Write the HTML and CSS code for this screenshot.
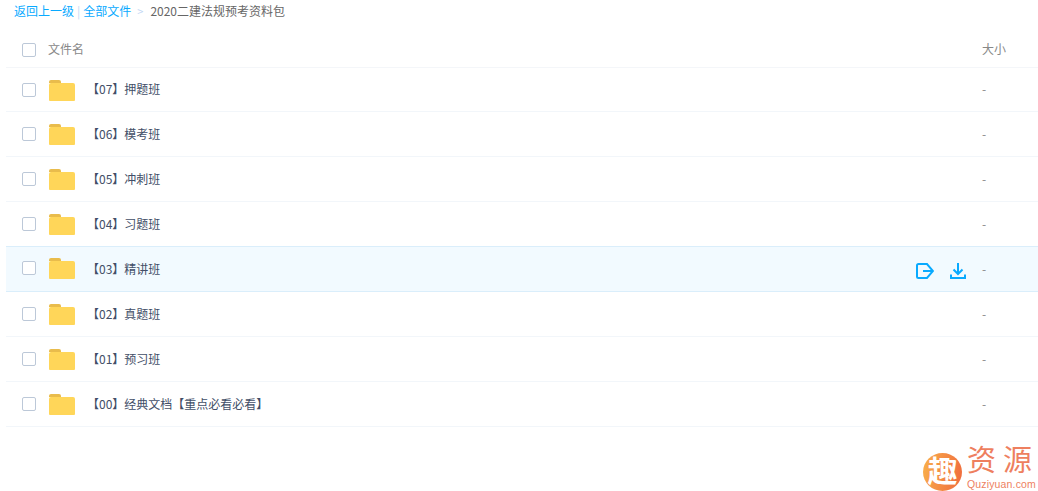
FILE: index.html
```html
<!DOCTYPE html>
<html lang="zh-CN">
<head>
<meta charset="utf-8">
<title>2020二建法规预考资料包</title>
<link rel="stylesheet" href="styles.css">
</head>
<body>
<nav class="crumbs">
  <a class="link">返回上一级</a><span class="sep">|</span><a class="link">全部文件</a><span class="gt">&gt;</span><span class="current">2020二建法规预考资料包</span>
</nav>
<div class="list">
  <div class="row head">
    <span class="check"></span>
    <span class="head-name">文件名</span>
    <span class="size-head">大小</span>
  </div>
  <div class="row item">
    <span class="check"></span>
    <svg class="folder" viewBox="0 0 26 21"><path d="M0 2a2 2 0 0 1 2-2h8a2 2 0 0 1 2 2v1H0z" fill="#e9bc4c"/><path d="M0 5a2 2 0 0 1 2-2h22a2 2 0 0 1 2 2v15a1 1 0 0 1-1 1H1a1 1 0 0 1-1-1z" fill="#ffd659"/></svg>
    <span class="name">【07】押题班</span><span class="size">-</span>
  </div>
  <div class="row item">
    <span class="check"></span>
    <svg class="folder" viewBox="0 0 26 21"><path d="M0 2a2 2 0 0 1 2-2h8a2 2 0 0 1 2 2v1H0z" fill="#e9bc4c"/><path d="M0 5a2 2 0 0 1 2-2h22a2 2 0 0 1 2 2v15a1 1 0 0 1-1 1H1a1 1 0 0 1-1-1z" fill="#ffd659"/></svg>
    <span class="name">【06】模考班</span><span class="size">-</span>
  </div>
  <div class="row item">
    <span class="check"></span>
    <svg class="folder" viewBox="0 0 26 21"><path d="M0 2a2 2 0 0 1 2-2h8a2 2 0 0 1 2 2v1H0z" fill="#e9bc4c"/><path d="M0 5a2 2 0 0 1 2-2h22a2 2 0 0 1 2 2v15a1 1 0 0 1-1 1H1a1 1 0 0 1-1-1z" fill="#ffd659"/></svg>
    <span class="name">【05】冲刺班</span><span class="size">-</span>
  </div>
  <div class="row item">
    <span class="check"></span>
    <svg class="folder" viewBox="0 0 26 21"><path d="M0 2a2 2 0 0 1 2-2h8a2 2 0 0 1 2 2v1H0z" fill="#e9bc4c"/><path d="M0 5a2 2 0 0 1 2-2h22a2 2 0 0 1 2 2v15a1 1 0 0 1-1 1H1a1 1 0 0 1-1-1z" fill="#ffd659"/></svg>
    <span class="name">【04】习题班</span><span class="size">-</span>
  </div>
  <div class="row item active">
    <span class="check"></span>
    <svg class="folder" viewBox="0 0 26 21"><path d="M0 2a2 2 0 0 1 2-2h8a2 2 0 0 1 2 2v1H0z" fill="#e9bc4c"/><path d="M0 5a2 2 0 0 1 2-2h22a2 2 0 0 1 2 2v15a1 1 0 0 1-1 1H1a1 1 0 0 1-1-1z" fill="#ffd659"/></svg>
    <span class="name">【03】精讲班</span>
    <span class="actions">
      <svg class="act-out" viewBox="0 0 18 16" fill="none" stroke="#09aaff" stroke-width="2"><path d="M2.500 1H11l6 7-6 7H2.500A1.500 1.500 0 0 1 1 13.500v-11A1.500 1.500 0 0 1 2.500 1z"/><path d="M7 8h10"/></svg>
      <svg class="act-down" viewBox="0 0 16 16" fill="none" stroke="#09aaff" stroke-width="2"><path d="M8 0v11M3.500 6.500 8 11l4.500-4.500"/><path d="M1 11.500V15h14v-3.500"/></svg>
    </span>
    <span class="size">-</span>
  </div>
  <div class="row item">
    <span class="check"></span>
    <svg class="folder" viewBox="0 0 26 21"><path d="M0 2a2 2 0 0 1 2-2h8a2 2 0 0 1 2 2v1H0z" fill="#e9bc4c"/><path d="M0 5a2 2 0 0 1 2-2h22a2 2 0 0 1 2 2v15a1 1 0 0 1-1 1H1a1 1 0 0 1-1-1z" fill="#ffd659"/></svg>
    <span class="name">【02】真题班</span><span class="size">-</span>
  </div>
  <div class="row item">
    <span class="check"></span>
    <svg class="folder" viewBox="0 0 26 21"><path d="M0 2a2 2 0 0 1 2-2h8a2 2 0 0 1 2 2v1H0z" fill="#e9bc4c"/><path d="M0 5a2 2 0 0 1 2-2h22a2 2 0 0 1 2 2v15a1 1 0 0 1-1 1H1a1 1 0 0 1-1-1z" fill="#ffd659"/></svg>
    <span class="name">【01】预习班</span><span class="size">-</span>
  </div>
  <div class="row item">
    <span class="check"></span>
    <svg class="folder" viewBox="0 0 26 21"><path d="M0 2a2 2 0 0 1 2-2h8a2 2 0 0 1 2 2v1H0z" fill="#e9bc4c"/><path d="M0 5a2 2 0 0 1 2-2h22a2 2 0 0 1 2 2v15a1 1 0 0 1-1 1H1a1 1 0 0 1-1-1z" fill="#ffd659"/></svg>
    <span class="name">【00】经典文档【重点必看必看】</span><span class="size">-</span>
  </div>
</div>
<div class="mark">
  <span class="badge">趣</span>
  <span class="mark-text"><span class="mark-cn">资源</span><span class="mark-en">Quziyuan.com</span></span>
</div>
</body>
</html>
```
FILE: styles.css
```css
* { box-sizing: border-box; }
html, body { margin: 0; padding: 0; }
body {
  width: 1038px;
  height: 491px;
  overflow: hidden;
  background: #fff;
  position: relative;
  font-family: "Noto Sans CJK SC", "Noto Sans", sans-serif;
  font-size: 12px;
  color: #424e67;
}
.crumbs {
  display: flex;
  align-items: center;
  height: 22px;
  padding-left: 14px;
  line-height: 22px;
  white-space: nowrap;
}
.link { color: #09aaff; }
.sep { color: #c4d8f4; margin: 0 3px; }
.gt { color: #c4d8f4; margin: 0 7px 0 6px; font-size: 11px; }
.current { color: #666; }
.list { margin-left: 6px; }
.row {
  display: flex;
  align-items: center;
  border-bottom: 1px solid #f4f6f9;
}
.head { height: 46px; padding-top: 11px; }
.item { height: 45px; border-bottom-color: #f2f6fa; }
.head + .item { height: 44px; }
.active {
  background: #f2faff;
  border-top: 1px solid #daeefb;
  border-bottom: 1px solid #daeefb;
  height: 46px;
  margin-top: -1px;
}
.check {
  width: 14px;
  height: 14px;
  margin-left: 16px;
  border: 1px solid #bcc8d8;
  border-radius: 2px;
  background: #fff;
  flex: none;
}
.active .check { margin-bottom: 2px; }
.head-name { margin: 0 0 4px 12px; color: #888; }
.size-head { margin: 0 32px 4px auto; color: #888; }
.folder { width: 26px; height: 21px; margin: 1px 0 0 13px; flex: none; }
.active .folder { margin: 0 0 1px 13px; }
.name {
  margin: 0 0 2px 12px;
  color: #424e67;
  white-space: nowrap;
  flex: none;
}
.size { margin: 0 0 2px auto; width: 56px; color: #888; }
.actions {
  margin: 3px 0 0 auto;
  display: flex;
  align-items: center;
  gap: 16px;
}
.actions + .size { margin-left: 16px; }
.act-out { width: 18px; height: 16px; flex: none; }
.act-down { width: 16px; height: 16px; flex: none; }
.mark {
  position: absolute;
  left: 923px;
  top: 447px;
  display: flex;
  align-items: flex-start;
  gap: 5px;
  font-family: "Liberation Sans", "Noto Sans CJK SC", sans-serif;
}
.badge {
  width: 39px;
  height: 38px;
  margin-top: 6px;
  border-radius: 50%;
  background: linear-gradient(100deg, #f9b04b, #ef6a3d);
  color: #fff;
  font-size: 30px;
  font-weight: 700;
  line-height: 38px;
  text-align: center;
}
.mark-text { display: flex; flex-direction: column; }
.mark-cn {
  font-size: 29px;
  line-height: 29px;
  letter-spacing: 7px;
  margin: 0 -7px 2px 0;
  color: #ee7f5f;
}
.mark-en {
  font-size: 10.500px;
  line-height: 12px;
  letter-spacing: .15px;
  color: #ee7f5f;
}
```
